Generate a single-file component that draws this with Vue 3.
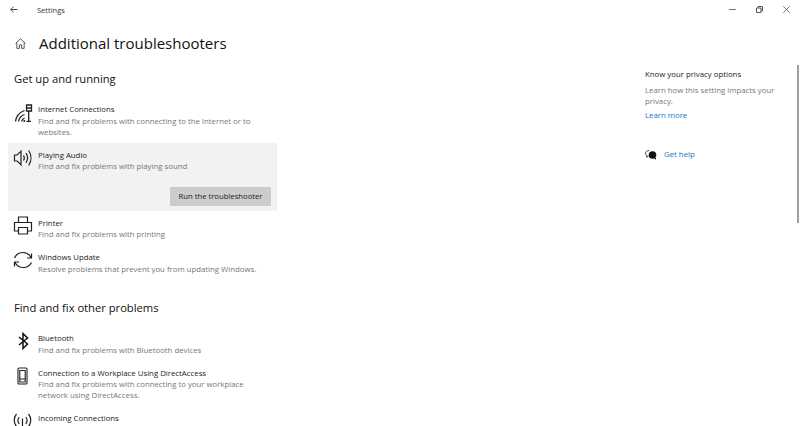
<script setup>
const groups = [
  {
    name: 'Get up and running',
    items: [
      { id: 'net', title: 'Internet Connections', desc: 'Find and fix problems with connecting to the Internet or to websites.' },
      { id: 'audio', title: 'Playing Audio', desc: 'Find and fix problems with playing sound', open: true },
      { id: 'printer', title: 'Printer', desc: 'Find and fix problems with printing' },
      { id: 'update', title: 'Windows Update', desc: 'Resolve problems that prevent you from updating Windows.' }
    ]
  },
  {
    name: 'Find and fix other problems',
    items: [
      { id: 'bt', title: 'Bluetooth', desc: 'Find and fix problems with Bluetooth devices' },
      { id: 'phone', title: 'Connection to a Workplace Using DirectAccess', desc: 'Find and fix problems with connecting to your workplace network using DirectAccess.' },
      { id: 'antenna', title: 'Incoming Connections', desc: '' }
    ]
  }
]
</script>

<template>
  <div class="window">
    <header class="titlebar">
      <svg class="back" width="8" height="7" viewBox="0 0 8 7" fill="none" stroke="#333" stroke-width=".9"><path d="M7.500 3.500H.8M3.500.7.800 3.500l2.700 2.800" /></svg>
      <span class="app-name">Settings</span>
      <div class="controls">
        <svg width="7" height="7" viewBox="0 0 7 7" stroke="#777" fill="none"><path d="M0 3.500h7" /></svg>
        <svg width="7" height="7" viewBox="0 0 7 7" stroke="#555" fill="none"><path d="M.5 2h4.500v4.500H.5zM2 2V.5h4.500V5H5" /></svg>
        <svg width="7" height="7" viewBox="0 0 7 7" stroke="#555" stroke-width=".8" fill="none"><path d="M.3.3l6.400 6.400M6.700.3.300 6.700" /></svg>
      </div>
    </header>

    <div class="page">
      <main class="content">
        <div class="heading">
          <svg class="home" width="11" height="11" viewBox="0 0 12 12" fill="none" stroke="#333" stroke-width=".9"><path d="M.6 6 6 .9 11.400 6M2 5v6.300h2.800V7.600h2.400v3.700H10V5" /></svg>
          <h1>Additional troubleshooters</h1>
        </div>

        <section v-for="group in groups" :key="group.name" class="group">
          <h2>{{ group.name }}</h2>
          <div class="list">
            <div v-for="item in group.items" :key="item.id" class="row" :class="{ open: item.open }">
              <div class="row-main">
                <div class="icon">
                  <svg v-if="item.id === 'net'" width="20" height="20" viewBox="0 0 20 20" fill="none" stroke="#222" stroke-width="1.300">
                    <path d="M2.500 19.500C3 14.500 6.500 10.500 11.500 8.500M5.500 19.500C6 16.500 8.500 13.500 11.500 12.500M8.500 19.500C9 18 10 16.800 11.500 16" />
                    <circle cx="11.300" cy="19" r="1" fill="#222" stroke="none" />
                    <path d="M13.500 3h5v6h-5zM13.500 6h5M15.700 9v10.500M13.500 19.500h4.500" />
                  </svg>
                  <svg v-else-if="item.id === 'audio'" width="20" height="20" viewBox="0 0 20 20" fill="none" stroke="#222" stroke-width="1.200">
                    <path d="M1.500 7h2.700L8 3.200v13.600L4.200 13H1.500z" />
                    <path d="M10.500 7.500c1 1.500 1 3.500 0 5M13 5.200c2 3 2 6.600 0 9.600M15.700 2.500c3 4.500 3 10.500 0 15" />
                  </svg>
                  <svg v-else-if="item.id === 'printer'" width="20" height="20" viewBox="0 0 20 20" fill="none" stroke="#222" stroke-width="1.200">
                    <path d="M5.500 6.500V1h9v5.500M5.500 15H1.500V6.500h17V15H14.500" />
                    <path d="M5.500 11.500h9V18h-9z" />
                  </svg>
                  <svg v-else-if="item.id === 'update'" width="20" height="20" viewBox="0 0 20 20" fill="none" stroke="#222" stroke-width="1.200">
                    <path d="M1.500 8C3 4.500 6 2.500 10 2.500c3.500 0 6.300 1.800 8 5M18.500 3.500v4.500H14" />
                    <path d="M18.500 12.500C17 15.500 14 17.500 10 17.500c-3.500 0-6.300-1.800-8-5M1.500 16.500V12H6" />
                  </svg>
                  <svg v-else-if="item.id === 'bt'" width="20" height="20" viewBox="0 0 20 20" fill="none" stroke="#111" stroke-width="1.500">
                    <path d="M6 6 14.500 13l-4.500 4.500v-15L14.500 7 6 14" />
                  </svg>
                  <svg v-else-if="item.id === 'phone'" width="20" height="20" viewBox="0 0 20 20" fill="none" stroke="#222" stroke-width="1.100">
                    <rect x="5" y="2" width="9" height="16" rx="1" />
                    <path d="M6.800 4.500h5.400V16H6.800zM6.800 13h5.400" />
                  </svg>
                  <svg v-else width="20" height="20" viewBox="0 0 20 20" fill="none" stroke="#222" stroke-width="1.200">
                    <path d="M3.500 3c-3 3.500-3 9 0 12.500M15.500 3c3 3.500 3 9 0 12.500M6.200 6c-1.500 2-1.500 5 0 7M12.800 6c1.500 2 1.500 5 0 7M9.500 7.500V20" />
                  </svg>
                </div>
                <div class="text">
                  <div class="title">{{ item.title }}</div>
                  <div v-if="item.desc" class="desc">{{ item.desc }}</div>
                </div>
              </div>
              <div v-if="item.open" class="actions">
                <button class="run" type="button">Run the troubleshooter</button>
              </div>
            </div>
          </div>
        </section>
      </main>

      <aside class="side">
        <div class="side-title">Know your privacy options</div>
        <p class="side-text">Learn how this setting impacts your privacy.</p>
        <a class="link">Learn more</a>
        <div class="help">
          <svg width="12" height="10" viewBox="0 0 12 10"><path d="M4 .5C1.900.5.500 1.700.500 3.300c0 1 .5 1.700 1.200 2.200v1.700l1.700-1.200" fill="none" stroke="#222" stroke-width=".9" /><circle cx="7.500" cy="5" r="3.800" fill="#111" /><path d="M9 8h2v1.800z" fill="#111" /></svg>
          <a class="link">Get help</a>
        </div>
      </aside>
    </div>

    <div class="scrollbar"></div>
  </div>
</template>

<style scoped>
.window {
  position: relative;
  width: 800px;
  height: 426px;
  overflow: hidden;
  background: #fff;
  color: #1a1a1a;
  font-family: "Open Sans", "Noto Sans", sans-serif;
}
.titlebar {
  display: flex;
  align-items: center;
  height: 19px;
  padding-left: 10px;
}
.back { margin-right: 19px; }
.app-name { font-size: 7.500px; color: #333; }
.controls {
  margin-left: auto;
  display: flex;
  gap: 20px;
  padding-right: 10.500px;
}
.page { display: flex; }
.content {
  width: 277px;
  flex: none;
  padding-left: 8px;
}
.heading {
  display: flex;
  align-items: center;
  height: 48px;
  padding-left: 7px;
}
.home { margin-right: 13px; }
h1 {
  margin: 0;
  font-size: 15px;
  font-weight: 400;
  color: #111;
}
.group { margin-top: 4px; }
.group + .group { margin-top: 20.500px; }
h2 {
  margin: 0;
  padding-left: 6px;
  font-size: 11.200px;
  font-weight: 400;
  line-height: 16px;
  color: #111;
}
.list { margin-top: 10px; display: flex; flex-direction: column; }
.row { width: 269px; padding: 7px 0 5px; }
.row.open { background: #f2f2f2; padding-bottom: 5px; }
.row-main { display: flex; }
.icon {
  flex: none;
  width: 30px;
  height: 20px;
  display: flex;
  justify-content: center;
  margin-top: -2px;
}
.text { width: 230px; }
.title { font-size: 7.800px; line-height: 11.500px; color: #222; }
.desc { font-size: 7.800px; line-height: 11px; color: #777; }
.actions { display: flex; justify-content: flex-end; padding: 14.500px 6px 0 0; }
.run {
  width: 101px;
  height: 19px;
  padding: 0;
  border: 0;
  background: #ccc;
  color: #222;
  font: inherit;
  font-size: 7.700px;
}
.side {
  margin-left: 360px;
  width: 150px;
  padding-top: 49.500px;
}
.side-title { font-size: 7.800px; line-height: 11px; color: #222; }
.side-text { margin: 5px 0 0; font-size: 7.800px; line-height: 11px; color: #777; }
.link { display: block; color: #0a78d4; font-size: 7.800px; line-height: 11px; }
.side-text + .link { margin-top: 3.500px; }
.help { display: flex; align-items: center; gap: 7px; margin-top: 28px; }
.scrollbar {
  position: absolute;
  left: 797px;
  top: 65px;
  width: 2px;
  height: 158px;
  background: #a0a0a0;
}
</style>
